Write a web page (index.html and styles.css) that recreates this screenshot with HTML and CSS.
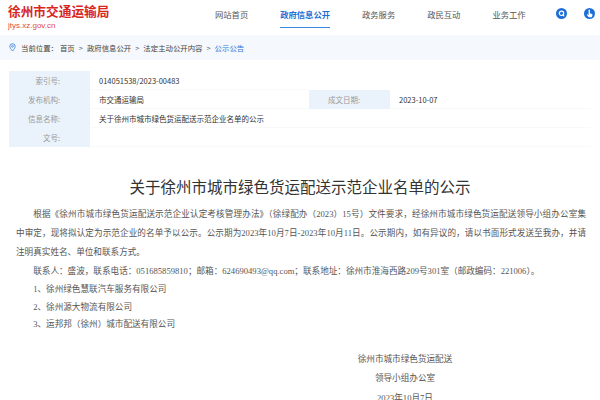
FILE: index.html
```html
<!DOCTYPE html>
<html lang="zh-CN">
<head>
  <meta charset="UTF-8" />
  <meta name="viewport" content="width=device-width, initial-scale=1.0"/>
  <title>关于徐州市城市绿色货运配送示范企业名单的公示</title>
  <link rel="stylesheet" href="styles.css">
</head>
<body>
  <header class="top">
    <div class="logo">
      <div class="logo-name">徐州市交通运输局</div>
      <div class="logo-url">jtys.xz.gov.cn</div>
    </div>
    <nav class="nav">
      <a href="#">网站首页</a>
      <a href="#" class="active">政府信息公开</a>
      <a href="#">政务服务</a>
      <a href="#">政民互动</a>
      <a href="#">业务工作</a>
    </nav>
    <div class="tools">
      <svg class="tool" viewBox="0 0 12 12">
        <circle cx="6" cy="6" r="6" fill="#1d6fd6"/>
        <circle cx="6" cy="5.8" r="2.4" fill="none" stroke="#fff" stroke-width="1.3"/>
        <path d="M7.6 7.5 L8.6 8.5" stroke="#fff" stroke-width="1.2" stroke-linecap="round"/>
      </svg>
      <svg class="tool" viewBox="0 0 12 12">
        <circle cx="6" cy="6" r="6" fill="#1d6fd6"/>
        <path d="M5 2.4 a0.7 0.7 0 0 1 1.4 0 V5.6 L8.8 6.5 C9.4 6.8 9.3 7.6 9 8.4 L8.4 10 H5.2 L3.2 7.6 C2.9 7.1 3.5 6.6 4 7 L5 7.9 Z" fill="#fff"/>
      </svg>
    </div>
  </header>

  <div class="crumbs">
    <svg class="pin" viewBox="0 0 10 12">
      <path d="M5 11 C2.5 8 1.2 6.2 1.2 4.4 a3.8 3.8 0 0 1 7.6 0 C8.8 6.2 7.5 8 5 11 Z" fill="none" stroke="#2b78d8" stroke-width="1.1"/>
      <circle cx="5" cy="4.4" r="1.3" fill="none" stroke="#2b78d8" stroke-width="1"/>
    </svg>
    <span class="crumbs-label">当前位置：</span>
    <a href="#">首页</a><span class="sep">&gt;</span>
    <a href="#">政府信息公开</a><span class="sep">&gt;</span>
    <a href="#">法定主动公开内容</a><span class="sep">&gt;</span>
    <a href="#" class="current">公示公告</a>
  </div>

  <div class="meta">
    <div class="meta-key">索引号:</div>
    <div class="meta-val">014051538/2023-00483</div>
    <div class="meta-blank"></div>
    <div class="meta-blank"></div>

    <div class="meta-key">发布机构:</div>
    <div class="meta-val">市交通运输局</div>
    <div class="meta-key">成文日期:</div>
    <div class="meta-val">2023-10-07</div>

    <div class="meta-key">信息名称:</div>
    <div class="meta-val meta-wide">关于徐州市城市绿色货运配送示范企业名单的公示</div>

    <div class="meta-key">文号:</div>
    <div class="meta-val meta-wide"></div>
  </div>

  <h1 class="title">关于徐州市城市绿色货运配送示范企业名单的公示</h1>

  <div class="article">
    <p>根据《徐州市城市绿色货运配送示范企业认定考核管理办法》（徐绿配办（2023）15号）文件要求，经徐州市城市绿色货运配送领导小组办公室集中审定，现将拟认定为示范企业的名单予以公示。公示期为2023年10月7日-2023年10月11日。公示期内，如有异议的，请以书面形式发送至我办，并请注明真实姓名、单位和联系方式。</p>
    <p>联系人：盛波，联系电话：051685859810；邮箱：624690493@qq.com；联系地址：徐州市淮海西路209号301室（邮政编码：221006）。</p>
    <p class="item">1、徐州绿色慧联汽车服务有限公司</p>
    <p class="item">2、徐州源大物流有限公司</p>
    <p class="item">3、运邦邦（徐州）城市配送有限公司</p>

    <div class="sign">
      <div>徐州市城市绿色货运配送</div>
      <div>领导小组办公室</div>
      <div>2023年10月7日</div>
    </div>
  </div>
</body>
</html>
```

FILE: styles.css
```css
body {
  margin: 0;
  background: white;
  color: #333;
  font-family: "Noto Sans CJK SC", "Noto Sans", sans-serif;
}

a {
  color: inherit;
  text-decoration: none;
}

.top {
  display: flex;
  align-items: flex-start;
  height: 35px;
  padding: 0 0 0 8px;
}

.logo {
  width: 207px;
  padding-top: 2px;
}

.logo-name {
  color: #d7261e;
  font-size: 12.7px;
  font-weight: bold;
  line-height: 17px;
}

.logo-url {
  color: #df4a44;
  font-family: "Liberation Sans", sans-serif;
  font-size: 8px;
  line-height: 12px;
  margin-top: 1px;
}

.nav {
  display: flex;
  gap: 32px;
  font-size: 8.3px;
  color: #555;
}

.nav a {
  display: block;
  height: 28px;
  line-height: 28px;
  box-sizing: border-box;
}

.nav a.active {
  color: #1d6fd6;
  font-weight: bold;
  border-bottom: 1.5px solid #3f8ae0;
}

.tools {
  display: flex;
  gap: 17px;
  margin-left: 30px;
  padding-top: 8px;
}

.tool {
  width: 11px;
  height: 11px;
}

.crumbs {
  display: flex;
  align-items: center;
  height: 25px;
  padding-left: 9px;
  background: #f5f8fc;
  font-size: 7.4px;
  color: #444;
}

.pin {
  width: 7px;
  height: 9px;
  margin-right: 5px;
}

.crumbs-label {
  margin-right: 2px;
}

.sep {
  margin: 0 4px;
  color: #666;
}

.crumbs .current {
  color: #2b78d8;
}

.meta {
  display: grid;
  grid-template-columns: 81px 219px 81px 1fr;
  grid-auto-rows: 19px;
  margin: 11px 9px 0 9px;
  font-size: 7.5px;
  line-height: 19px;
}

.meta-key {
  background: #eaf3fc;
  color: #999;
  text-align: right;
  padding-right: 30px;
}

.meta-val {
  padding-left: 9px;
  color: #333;
  border-bottom: 1px solid #f8f9fb;
}

.meta-wide {
  grid-column: span 3;
}

.title {
  margin: 29px 0 0 0;
  text-align: center;
  font-size: 15.5px;
  font-weight: normal;
  line-height: 20px;
  color: #333;
}

.article {
  padding: 9px 14px 0 16px;
  font-family: "Liberation Serif", "Noto Sans CJK SC", serif;
  font-size: 8.6px;
  color: #555;
}

.article p {
  margin: 0;
  text-indent: 2em;
  line-height: 19px;
  text-align: justify;
}

.article p.item {
  line-height: 17.5px;
}

.sign {
  display: flex;
  flex-direction: column;
  align-items: center;
  width: 200px;
  margin: 16px 0 0 289px;
  line-height: 19.5px;
}
```
